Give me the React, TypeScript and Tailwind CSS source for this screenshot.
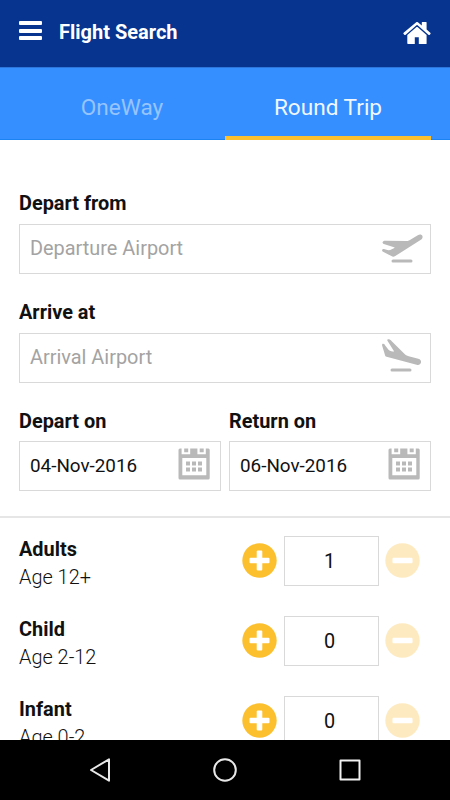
import React from "react";

function HomeIcon() {
  return (
    <svg className="mt-[3px] h-[22px] w-7" viewBox="0 0 28 22" fill="#fff">
      <path d="M13.2.3a1.4 1.4 0 0 1 1.700 0L18.800 3.600V.5a.5.5 0 0 1 .5-.5h3.800a.5.5 0 0 1 .5.5v7l3.400 3c.7.6.8 1.100.4 1.600l-.6.6c-.4.4-1 .4-1.400 0L14.600 3.300a.9.9 0 0 0-1.100 0L2.700 12.700c-.5.4-1 .4-1.400 0l-.7-.7c-.4-.5-.3-1 .3-1.500z" />
      <path d="M13.500 5.100a.8.8 0 0 1 1 0L23.600 13v8.400c0 .4-.2.6-.6.6h-7.200v-6.800h-4V22H5a.7.7 0 0 1-.7-.7V13z" />
    </svg>
  );
}

function TakeoffIcon() {
  return (
    <svg className="h-8 w-11 overflow-visible" viewBox="379 233 44 32" fill="#b9b9b9">
      <path d="M382.700 242.100c.5-.9 1.300-1.400 2.600-1.400l21.500.2c1.200 0 1.800-.2 2.700-.7l8.300-5c2-1.200 4-.8 4.600.8.5 1.400-.1 2.900-1.500 3.800L395.300 255.900c-1.500 1-2.400 1-3.900.2l-8.800-4.700c-.8-.5-.8-1.700.1-2.200.5-.3 1.200-.3 2 0l3.700 1c2.300-.2 4.800-1.200 6.400-2.700l-11-3.500c-1-.3-1.500-1.200-1.100-1.900z" />
      <rect x="391.500" y="259.600" width="21" height="3" rx="1.500" />
    </svg>
  );
}

function LandingIcon() {
  return (
    <svg className="h-9 w-11 overflow-visible" viewBox="379 339.5 44 36" fill="#b9b9b9">
      <path d="M387.300 340.100c-.2-1.100.9-1.700 2.300-1.100 1 .4 1.600 1.200 2.400 2l12.100 12c1.300 1.400 2.700 2.300 4.600 2.800l9.600 2.400c2 .5 3.200 2 2.700 3.900-.6 2-2.200 2.700-4.400 2.100l-30-8c-1-.3-1.400-.8-1.600-1.800l-2.900-9.500c-.2-1.100.3-1.700 1.200-1.600.8.1 1.500.8 1.900 1.600l3.500 4.700c1.600 1 3.400 1.500 5.500 1.500z" />
      <rect x="390.500" y="368.100" width="21" height="3" rx="1.500" />
    </svg>
  );
}

function CalendarIcon() {
  return (
    <svg className="h-8 w-8 shrink-0" viewBox="0 0 32 32" fill="#b9b9b9">
      <path
        fillRule="evenodd"
        d="M2 .5h1.600v5.700h8.600V.5h7.200v5.700h8.400V.5H30A1.500 1.500 0 0 1 31.700 2v28a1.500 1.500 0 0 1-1.500 1.500H2A1.500 1.500 0 0 1 .5 30V2A1.500 1.500 0 0 1 2 .5zM4.300 10v17.300h24V10z"
      />
      <path d="M6.200.5h4v3.700h-4zM21.700.5h4v3.700h-4zM8 13.500h4v4H8zM14 13.500h4v4h-4zM20 13.500h4v4h-4zM8 19.500h4v4H8zM14 19.500h4v4h-4zM20 19.500h4v4h-4z" />
    </svg>
  );
}

function StepButton({ plus }: { plus?: boolean }) {
  return (
    <button className="mt-[-1px] block h-[35px] w-[35px] shrink-0">
      <svg viewBox="0 0 35 35" className="block h-[35px] w-[35px]">
        <circle cx="17.500" cy="17.500" r="17.200" fill={plus ? "#fcbf2d" : "#feeac0"} />
        <rect x="7.500" y="14.700" width="20" height="5.600" rx="1" fill="#fff" />
        {plus && <rect x="14.700" y="7.500" width="5.600" height="20" rx="1" fill="#fff" />}
      </svg>
    </button>
  );
}

function AirportField({ label, hint, icon }: { label: string; hint: string; icon: React.ReactNode }) {
  return (
    <section className="h-[108.67px]">
      <h2 className="h-[33px] pt-px text-[19.9px] leading-6 font-bold">{label}</h2>
      <div className="flex h-[50px] items-center justify-between border border-[#d9d9d9] pr-[7px] pl-[10px]">
        <span className="text-[19.9px] text-[#a3a3a3]">{hint}</span>
        {icon}
      </div>
    </section>
  );
}

function DateField({ label, date }: { label: string; date: string }) {
  return (
    <section className="flex-1">
      <h2 className="h-[33px] pt-[1.3px] text-[19.9px] leading-6 font-bold">{label}</h2>
      <div className="flex h-[50px] items-center justify-between border border-[#d9d9d9] pr-[10px] pb-1 pl-[10px]">
        <span className="pt-[3px] text-[18.85px]">{date}</span>
        <CalendarIcon />
      </div>
    </section>
  );
}

function PassengerRow({ name, age, count }: { name: string; age: string; count: number }) {
  return (
    <div className="flex h-20 items-start">
      <div className="w-[223px]">
        <div className="h-7 text-[19.9px] leading-[27px] font-bold">{name}</div>
        <div className="text-[19.9px] leading-[27px] font-light">{age}</div>
      </div>
      <div className="flex h-[50px] items-center gap-[6.5px]">
        <StepButton plus />
        <div className="flex h-[50px] w-[95px] items-center justify-center border border-[#d9d9d9] pt-[2px] pr-[3px] text-[19.9px]">{count}</div>
        <StepButton />
      </div>
    </div>
  );
}

export default function App() {
  return (
    <div className="flex h-[800px] w-[450px] flex-col overflow-hidden bg-white font-['Roboto',sans-serif] text-[#111]">
      <header className="flex h-[67px] shrink-0 items-center bg-[#06348f] pr-[19px] pb-1 pl-[19px]">
        <div className="flex w-[23px] flex-col gap-[3.5px] pb-[2px]">
          <i className="h-1 rounded-[1px] bg-white" />
          <i className="h-1 rounded-[1px] bg-white" />
          <i className="h-1 rounded-[1px] bg-white" />
        </div>
        <h1 className="ml-[17px] flex-1 text-[20px] font-bold text-white">Flight Search</h1>
        <HomeIcon />
      </header>
      <nav className="flex h-[73px] shrink-0 border-t border-b border-t-[#2c76dc] border-b-[#1b84f2] bg-[#368fff] px-[19px] text-[22.6px]">
        <div className="flex flex-1 items-center justify-center pt-[9px] text-[#96c4ff]">OneWay</div>
        <div className="-mb-px flex flex-1 items-center justify-center border-b-4 border-[#fcbf2d] pt-[12px] text-[#f0f7ff]">Round Trip</div>
      </nav>
      <main className="flex min-h-0 flex-1 flex-col overflow-hidden">
        <div className="shrink-0 px-[19px] pt-[51px]">
          <AirportField label="Depart from" hint="Departure Airport" icon={<TakeoffIcon />} />
          <AirportField label="Arrive at" hint="Arrival Airport" icon={<LandingIcon />} />
          <div className="flex h-[107.66px] gap-2">
            <DateField label="Depart on" date="04-Nov-2016" />
            <DateField label="Return on" date="06-Nov-2016" />
          </div>
        </div>
        <div className="shrink-0 border-t-2 border-[#e6e6e6] px-[19px] pt-[18px]">
          <PassengerRow name="Adults" age="Age 12+" count={1} />
          <PassengerRow name="Child" age="Age 2-12" count={0} />
          <PassengerRow name="Infant" age="Age 0-2" count={0} />
        </div>
      </main>
      <footer className="flex h-[60px] shrink-0 items-center justify-center gap-[101px] bg-black">
        <svg className="h-6 w-6" viewBox="0 0 24 24" fill="none" stroke="#e8e8e8" strokeWidth="2" strokeLinejoin="round">
          <path d="M21 1.300v21.400L3 12z" />
        </svg>
        <svg className="h-6 w-6" viewBox="0 0 24 24" fill="none" stroke="#e8e8e8" strokeWidth="2">
          <circle cx="12" cy="12" r="10.800" />
        </svg>
        <svg className="h-6 w-6" viewBox="0 0 24 24" fill="none" stroke="#f2f2f2" strokeWidth="2" strokeLinejoin="round">
          <path d="M2.500 2.500h19v19h-19z" />
        </svg>
      </footer>
    </div>
  );
}
